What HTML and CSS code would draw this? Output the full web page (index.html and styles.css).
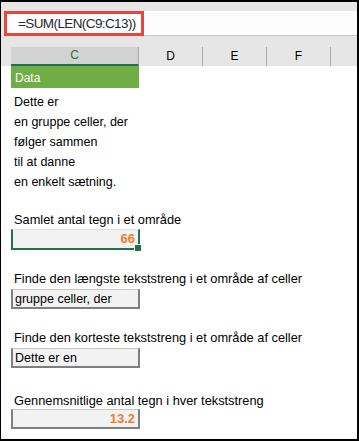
FILE: index.html
```html
<!DOCTYPE html>
<html lang="da">
<head>
    <meta charset="UTF-8">
    <meta name="viewport" content="width=device-width, initial-scale=1.0">
    <title>LEN i et område</title>
    <link rel="stylesheet" href="styles.css">
</head>
<body>
    <div class="frame">
        <div class="top">
            <div class="formula-bar">
                <div class="formula">=SUM(LEN(C9:C13))</div>
            </div>
            <div class="headers">
                <div class="col-head col-c">C</div>
                <div class="col-head">D</div>
                <div class="col-head">E</div>
                <div class="col-head">F</div>
                <div class="col-head col-g"></div>
            </div>
        </div>

        <div class="sheet">
            <div class="data-head">Data</div>
            <div class="data-lines">
                <div class="line">Dette er</div>
                <div class="line">en gruppe celler, der</div>
                <div class="line">følger sammen</div>
                <div class="line">til at danne</div>
                <div class="line">en enkelt sætning.</div>
            </div>

            <div class="label first">Samlet antal tegn i et område</div>
            <div class="result selected num">66<span class="handle"></span></div>

            <div class="label">Finde den længste tekststreng i et område af celler</div>
            <div class="result">gruppe celler, der</div>

            <div class="label">Finde den korteste tekststreng i et område af celler</div>
            <div class="result">Dette er en</div>

            <div class="label last">Gennemsnitlige antal tegn i hver tekststreng</div>
            <div class="result num">13.2</div>
        </div>
    </div>
</body>
</html>
```

FILE: styles.css
```css
body {
    margin: 0;
    padding: 0;
    font-family: "Liberation Sans", Arial, sans-serif;
    color: #000;
}
.frame {
    width: 359px;
    height: 441px;
    box-sizing: border-box;
    border: 2px solid #000;
    border-left-width: 1px;
    background: #fff;
    overflow: hidden;
}
.top {
    background: #e6e6e6;
    padding-top: 9px;
}
.formula-bar {
    background: #fdfdfd;
    border-bottom: 1px solid #c6c6c6;
    margin-left: 3px;
    height: 24px;
}
.formula {
    width: 140px;
    height: 25px;
    box-sizing: border-box;
    border: 3px solid #e8453c;
    padding-left: 11px;
    font-size: 13.5px;
    letter-spacing: -0.6px;
    line-height: 19px;
    color: #262a33;
    white-space: nowrap;
}
.headers {
    display: flex;
    margin-top: 11px;
    margin-left: 10px;
    height: 19px;
}
.col-head {
    width: 64px;
    box-sizing: border-box;
    border-right: 1px solid #ababab;
    font-size: 12px;
    line-height: 18px;
    text-align: center;
}
.col-c {
    width: 128px;
    background: #d2d2d2;
    color: #217346;
    border-bottom: 2px solid #217346;
    line-height: 17px;
}
.col-g {
    flex: 1;
    border-right: none;
}
.sheet {
    padding-left: 10px;
}
.data-head {
    width: 128px;
    height: 22px;
    background: #70ad47;
    color: #fff;
    font-size: 12px;
    line-height: 24px;
    padding-left: 4px;
    box-sizing: border-box;
}
.data-lines {
    margin-top: 4px;
}
.line {
    height: 20px;
    line-height: 20px;
    font-size: 12.5px;
    padding-left: 3px;
}
.label {
    margin-top: 21px;
    height: 16px;
    line-height: 16px;
    font-size: 12.8px;
    padding-left: 3px;
}
.label.first {
    margin-top: 20px;
}
.label.last {
    margin-top: 25px;
}
.result {
    position: relative;
    width: 129px;
    height: 20px;
    margin-top: 2px;
    box-sizing: border-box;
    background: #f2f2f2;
    border: 2px solid #7f7f7f;
    border-top: 1px solid #c6c6c6;
    font-size: 12.5px;
    line-height: 19px;
    padding: 0 3px 0 2px;
    white-space: nowrap;
}
.label.first + .result {
    margin-top: 1px;
    height: 21px;
}
.label.last + .result {
    margin-top: 0;
}
.num {
    text-align: right;
    color: #ed7d31;
    font-weight: bold;
    font-size: 13px;
    line-height: 18px;
}
.selected {
    border-color: #217346;
    border-top-color: #e0e0e0;
}
.handle {
    position: absolute;
    right: -4px;
    bottom: -4px;
    width: 6px;
    height: 6px;
    background: #217346;
    border: 1px solid #fff;
}
```
